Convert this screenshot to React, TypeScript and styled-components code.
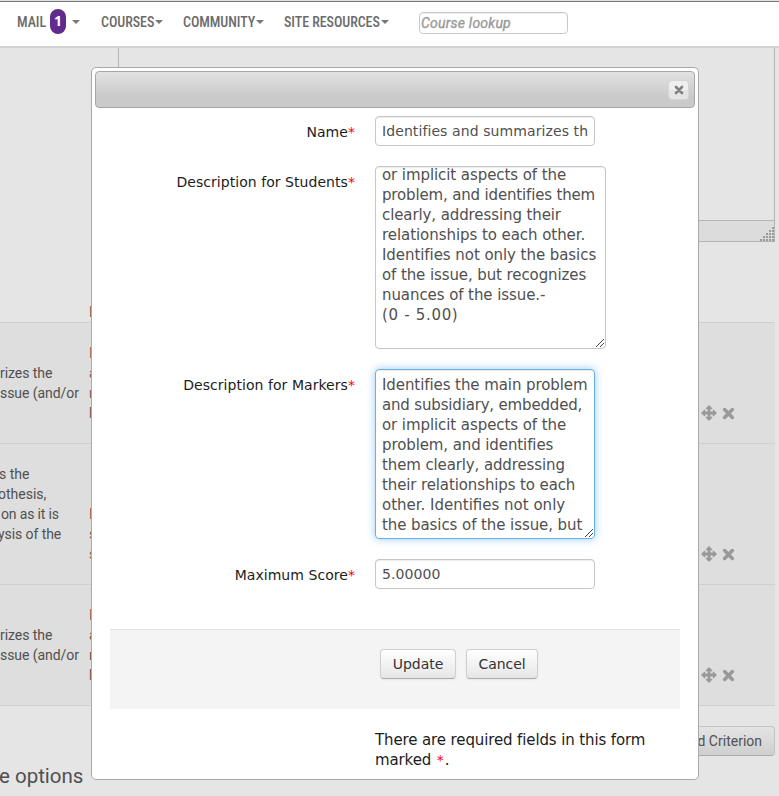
import React from "react";
import styled, { createGlobalStyle } from "styled-components";

const GlobalStyle = createGlobalStyle`
  * { box-sizing: border-box; }
  html, body { margin: 0; padding: 0; background: #e5e5e5; }
  body { overflow: hidden; }
`;

const Page = styled.div`
  position: relative;
  width: 779px;
  height: 796px;
  overflow: hidden;
  background: #e5e5e5;
  font-family: Roboto, "Liberation Sans", sans-serif;
  color: #505050;
`;

const NavBar = styled.header`
  height: 48px;
  display: flex;
  align-items: flex-start;
  padding: 0 0 0 17px;
  background: #fff;
  border-bottom: 2px solid #d2d2d2;
  box-shadow: inset 0 1px #e2e2e2, inset 0 2px #777;
`;

const NavItem = styled.div<{ $width: number; $gap?: number }>`
  width: ${(p) => p.$width}px;
  flex: none;
  display: flex;
  align-items: center;
  gap: ${(p) => p.$gap ?? 2}px;
  height: 43px;
  white-space: nowrap;
`;

const NavText = styled.span<{ $width: number }>`
  width: ${(p) => p.$width}px;
  font-size: 14px;
  font-weight: 500;
  font-stretch: 75%;
  letter-spacing: -0.06px;
  color: #6b6b6b;
`;

const Count = styled.span`
  width: 16px;
  height: 25px;
  margin: 0 2px 0 1px;
  border-radius: 8px;
  background: #5f2c8d;
  color: #fff;
  font: 700 14px/24px "Open Sans", sans-serif;
  text-align: center;
`;

const Caret = styled.i`
  border: 4px solid transparent;
  border-top-color: #777;
  border-bottom: 0;
`;

const Lookup = styled.div`
  width: 149px;
  height: 22px;
  margin-top: 12px;
  padding-left: 1px;
  border: 1px solid #c8c8c8;
  border-radius: 4px;
  box-shadow: inset 0 1px 1px #eee;
  font-size: 14px;
  line-height: 20px;
  letter-spacing: 0.22px;
  font-style: italic;
  color: #999;
  -webkit-text-stroke: 0.35px #999;
`;

const Editor = styled.div`
  width: 657px;
  height: 194px;
  margin-left: 118px;
  display: flex;
  flex-direction: column;
  justify-content: flex-end;
  border: 1px solid #b4b4b4;
  border-top: 0;
`;

const EditorStatus = styled.div`
  height: 21px;
  display: flex;
  justify-content: flex-end;
  align-items: flex-end;
  background: #dcdcdc;
  border-top: 1px solid #b4b4b4;
`;

const TableHead = styled.div`
  height: 80px;
  padding: 60px 0 0 89px;
  font-size: 14px;
  line-height: 20px;
  color: #7c5a50;
`;

const Table = styled.div`
  width: 775px;
  border-bottom: 1px solid #cfcfcf;
`;

const Row = styled.div<{ $height: number }>`
  height: ${(p) => p.$height}px;
  display: grid;
  grid-template-columns: 89px 612px 1fr;
  border-top: 1px solid #cfcfcf;
  background: #dedede;
  font-size: 14px;
  line-height: 20px;
`;

const Cell = styled.div<{ $top: number; $tint?: boolean }>`
  padding-top: ${(p) => p.$top}px;
  white-space: pre;
  color: ${(p) => (p.$tint ? "#7c5a50" : "#505050")};
`;

const Line = styled.div<{ $shift?: number; $track?: number }>`
  margin-left: ${(p) => p.$shift ?? 0}px;
  letter-spacing: ${(p) => p.$track ?? 0}px;
`;

const Actions = styled.div`
  display: flex;
  align-self: end;
  align-items: center;
  gap: 5px;
  padding-bottom: 22px;
`;

const Footer = styled.footer`
  height: 90px;
  width: 775px;
  padding-top: 20px;
  display: flex;
  justify-content: space-between;
`;

const OptionsTitle = styled.h2`
  margin: 35px 0 0 -1px;
  font-size: 20.5px;
  line-height: 30px;
  font-weight: 400;
`;

const AddButton = styled.div`
  width: 120px;
  height: 30px;
  padding-right: 12px;
  border: 1px solid #c4c4c4;
  border-bottom-color: #aaa;
  border-radius: 4px;
  background: linear-gradient(#e4e4e4, #cfcfcf);
  font-size: 14px;
  line-height: 28px;
  text-align: right;
`;

const Dialog = styled.section`
  position: absolute;
  left: 91px;
  top: 67px;
  width: 608px;
  height: 713px;
  padding: 3px;
  border: 1px solid #a9a9a9;
  border-radius: 5px;
  background: #fff;
  font-family: "DejaVu Sans", Verdana, sans-serif;
  color: #1c1c1c;
`;

const TitleBar = styled.div`
  height: 37px;
  display: flex;
  justify-content: flex-end;
  padding: 8px 5px;
  border: 1px solid #a6a6a6;
  border-radius: 4px;
  background: linear-gradient(#e2e2e2, #cacaca 70%);
`;

const CloseButton = styled.div`
  width: 21px;
  height: 20px;
  display: flex;
  align-items: center;
  justify-content: center;
  padding-left: 1px;
  border: 1px solid #d6d6d6;
  border-radius: 4px;
  background: linear-gradient(#efefef 50%, #e5e5e5 50%);
`;

const Field = styled.div<{ $gap: number }>`
  display: flex;
  align-items: flex-start;
  margin-bottom: ${(p) => p.$gap}px;
`;

const Label = styled.label`
  width: 260px;
  margin-right: 20px;
  padding-top: 6px;
  font-size: 14px;
  line-height: 20px;
  letter-spacing: 0.05px;
  text-align: right;
  white-space: nowrap;
`;

const Required = styled.span`
  color: #f00;
`;

const Form = styled.div`
  padding-top: 8px;
`;

const Input = styled.div`
  width: 220px;
  height: 30px;
  padding: 4px 6px;
  overflow: hidden;
  border: 1px solid #c6c6c6;
  border-radius: 4px;
  box-shadow: inset 0 1px 1px rgba(0, 0, 0, 0.075);
  font-size: 14px;
  line-height: 20px;
  letter-spacing: 0.09px;
  white-space: nowrap;
  color: #505050;
`;

const TextArea = styled.div<{ $w: number; $h: number; $focus?: boolean; $offset: number }>`
  position: relative;
  width: ${(p) => p.$w}px;
  height: ${(p) => p.$h}px;
  padding: 0 6px;
  overflow: hidden;
  border: 1px solid ${(p) => (p.$focus ? "#66afe9" : "#c6c6c6")};
  border-radius: 4px;
  box-shadow: ${(p) =>
    p.$focus
      ? "inset 0 1px 1px rgba(0,0,0,.075), 0 0 8px rgba(82,168,236,.6)"
      : "inset 0 1px 1px rgba(0,0,0,.075)"};
  font-size: 15px;
  line-height: 20px;
  white-space: nowrap;
  color: #505050;

  & > div:first-child {
    margin-top: ${(p) => p.$offset}px;
  }
`;

const Grip = styled.svg`
  position: absolute;
  right: 0;
  bottom: 0;
`;

const ButtonBar = styled.div`
  width: 570px;
  height: 80px;
  margin-left: 15px;
  padding: 19px 0 0 270px;
  display: flex;
  gap: 10px;
  border-top: 1px solid #e2e2e2;
  background: #f4f4f4;
`;

const Button = styled.div<{ $w: number }>`
  width: ${(p) => p.$w}px;
  height: 30px;
  border: 1px solid #cfcfcf;
  border-bottom-color: #ababab;
  border-radius: 4px;
  background: linear-gradient(#fff, #e6e6e6);
  box-shadow: 0 1px 2px rgba(0, 0, 0, 0.05);
  font-size: 14px;
  line-height: 28px;
  letter-spacing: -0.05px;
  text-align: center;
  color: #333;
`;

const Note = styled.div`
  margin: 21px 0 0 280px;
  font-size: 15px;
  line-height: 20px;
  letter-spacing: -0.12px;
  white-space: nowrap;
`;

const Mark = styled(Required)`
  margin: 0 1px;
  font-size: 14px;
`;

const Cross = ({ size, color }: { size: number; color: string }) => (
  <svg width={size} height={size} viewBox="0 0 12 12">
    <path d="M2.4 2.4 9.6 9.6M9.6 2.4 2.4 9.6" stroke={color} strokeWidth="3.2" strokeLinecap="round" />
  </svg>
);

const Move = () => (
  <svg width="16" height="16" viewBox="0 0 16 16" fill="#999">
    <path d="M8 0 11.2 3.3V4.2H9.4V6.6H11.8V4.8H12.7L16 8 12.7 11.2H11.8V9.4H9.4V11.8H11.2V12.7L8 16 4.8 12.7V11.8H6.6V9.4H4.2V11.2H3.3L0 8 3.3 4.8H4.2V6.6H6.6V4.2H4.8V3.3Z" />
  </svg>
);

const ResizeLines = () => (
  <Grip width="10" height="10" viewBox="0 0 10 10" fill="#444" shapeRendering="crispEdges">
    {[0, 1, 2, 3, 4, 5, 6, 7].map((n) => (
      <rect key={n} x={1 + n} y={8 - n} width="1" height="1" />
    ))}
    {[0, 1, 2, 3].map((n) => (
      <rect key={n} x={5 + n} y={8 - n} width="1" height="1" />
    ))}
  </Grip>
);

const dots = [0, 1, 2, 3, 4].flatMap((r) => Array.from({ length: r + 1 }, (_, i) => [4 - i, r]));

const CornerDots = () => (
  <svg width="15" height="15" viewBox="0 0 15 15" fill="#999">
    {dots.map(([x, y]) => (
      <rect key={`${x}-${y}`} x={x * 3 + 1} y={y * 3 + 1} width="2" height="2" />
    ))}
  </svg>
);

type TextLine = { text: string; shift?: number; track?: number };
const criteria: { height: number; top: number; left: TextLine[]; rightTop: number; right: string }[] = [
  {
    height: 121,
    top: 40,
    left: [{ text: "rizes the", track: -0.06 }, { text: "ssue (and/or", track: -0.06 }],
    rightTop: 20,
    right: "I\na\nn\nb",
  },
  {
    height: 141,
    top: 20,
    left: [
      { text: "s the", shift: -1 },
      { text: "othesis,", shift: -2 },
      { text: "on as it is", shift: 1, track: -0.15 },
      { text: "ysis of the", shift: -2, track: -0.08 },
    ],
    rightTop: 60,
    right: "I\ns\ns",
  },
  {
    height: 121,
    top: 40,
    left: [{ text: "rizes the", track: -0.06 }, { text: "ssue (and/or", track: -0.06 }],
    rightTop: 20,
    right: "I\na\nn\nb",
  },
];

const studentLines: TextLine[] = [
  { text: "or implicit aspects of the", track: -0.08 },
  { text: "problem, and identifies them", track: -0.16 },
  { text: "clearly, addressing their", track: -0.1 },
  { text: "relationships to each other.", track: -0.06 },
  { text: "Identifies not only the basics", track: -0.06 },
  { text: "of the issue, but recognizes", track: -0.1 },
  { text: "nuances of the issue.-", track: -0.08 },
  { text: "(0 - 5.00)", track: 0.68 },
];

const markerLines: TextLine[] = [
  { text: "Identifies the main problem", track: -0.08 },
  { text: "and subsidiary, embedded,", track: -0.17 },
  { text: "or implicit aspects of the", track: -0.08 },
  { text: "problem, and identifies", track: -0.1 },
  { text: "them clearly, addressing", track: -0.12 },
  { text: "their relationships to each", track: -0.12 },
  { text: "other. Identifies not only" },
  { text: "the basics of the issue, but", track: -0.08 },
];

const Lines = ({ items }: { items: TextLine[] }) => (
  <>
    {items.map((l) => (
      <Line key={l.text} $shift={l.shift} $track={l.track}>
        {l.text}
      </Line>
    ))}
  </>
);

export default function App() {
  return (
    <Page>
      <GlobalStyle />
      <NavBar>
        <NavItem $width={84} $gap={4}>
          <NavText $width={28}>MAIL</NavText>
          <Count>1</Count>
          <Caret />
        </NavItem>
        <NavItem $width={82}><NavText $width={52}>COURSES</NavText><Caret /></NavItem>
        <NavItem $width={101}><NavText $width={71}>COMMUNITY</NavText><Caret /></NavItem>
        <NavItem $width={135}><NavText $width={95}>SITE RESOURCES</NavText><Caret /></NavItem>
        <Lookup>Course lookup</Lookup>
      </NavBar>
      <Editor>
        <EditorStatus><CornerDots /></EditorStatus>
      </Editor>
      <TableHead>D</TableHead>
      <Table>
        {criteria.map((c, i) => (
          <Row key={i} $height={c.height}>
            <Cell $top={c.top}><Lines items={c.left} /></Cell>
            <Cell $top={c.rightTop} $tint>{c.right}</Cell>
            <Actions><Move /><Cross size={13} color="#999" /></Actions>
          </Row>
        ))}
      </Table>
      <Footer>
        <OptionsTitle>e options</OptionsTitle>
        <AddButton>d Criterion</AddButton>
      </Footer>
      <Dialog>
        <TitleBar>
          <CloseButton><Cross size={10} color="#808080" /></CloseButton>
        </TitleBar>
        <Form>
          <Field $gap={20}>
            <Label>Name<Required>*</Required></Label>
            <Input>Identifies and summarizes th</Input>
          </Field>
          <Field $gap={20}>
            <Label>Description for Students<Required>*</Required></Label>
            <TextArea $w={231} $h={183} $offset={-2}><Lines items={studentLines} /><ResizeLines /></TextArea>
          </Field>
          <Field $gap={20}>
            <Label>Description for Markers<Required>*</Required></Label>
            <TextArea $w={220} $h={170} $offset={5} $focus><Lines items={markerLines} /><ResizeLines /></TextArea>
          </Field>
          <Field $gap={40}>
            <Label>Maximum Score<Required>*</Required></Label>
            <Input>5.00000</Input>
          </Field>
        </Form>
        <ButtonBar>
          <Button $w={76}>Update</Button>
          <Button $w={72}>Cancel</Button>
        </ButtonBar>
        <Note>
          There are required fields in this form<br />marked <Mark>*</Mark>.
        </Note>
      </Dialog>
    </Page>
  );
}
